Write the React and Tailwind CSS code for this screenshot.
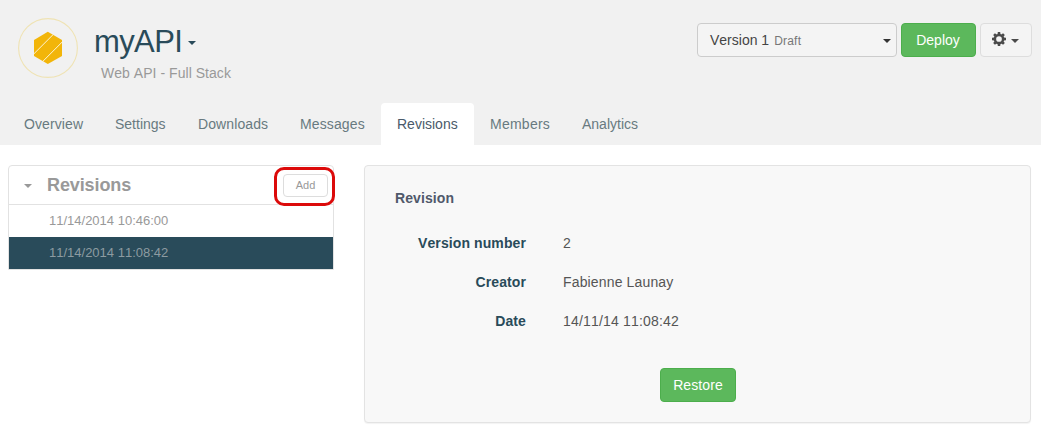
const tabs = [
  { label: "Overview", cls: "w-[91px] tracking-[0.1px]" },
  { label: "Settings", cls: "w-[83px]" },
  { label: "Downloads", cls: "w-[102px] tracking-[0.1px]" },
  { label: "Messages", cls: "w-[97px] tracking-[0.12px]" },
  { label: "Revisions", cls: "w-[93px]", active: true },
  { label: "Members", cls: "w-[92px] tracking-[0.25px]" },
  { label: "Analytics", cls: "w-[90px]" },
];

const details = [
  { label: "Version number", value: "2", cls: "" },
  { label: "Creator", value: "Fabienne Launay", cls: "tracking-[0.15px]" },
  { label: "Date", value: "14/11/14 11:08:42", cls: "tracking-[0.18px]" },
];

function Caret({ className = "" }) {
  return (
    <svg className={`h-1 w-2 shrink-0 ${className}`} viewBox="0 0 8 4" fill="currentColor">
      <path d="M0 0h8L4 4z" />
    </svg>
  );
}

function Logo() {
  return (
    <svg className="size-[60px] shrink-0" viewBox="0 0 60 60">
      <circle cx="30" cy="30" r="29.4" fill="none" stroke="#efe3b4" strokeWidth="1.1" />
      <path d="M29.8 13.8 44 22v16l-14.2 8L16 38V22z" fill="#f2b509" />
      <path d="M15.5 36.2 35.5 16.2M24 44.2 44.5 23.7" stroke="#fdf5d8" strokeWidth="1" />
    </svg>
  );
}

function Gear() {
  return (
    <svg className="-mt-[2px] size-[14px] shrink-0" viewBox="-7 -7 14 14">
      <circle r="4.1" fill="none" stroke="currentColor" strokeWidth="2.5" />
      {[0, 45, 90, 135, 180, 225, 270, 315].map((a) => (
        <path key={a} d="M-1.5-4.7-1.2-7H1.2l.3 2.3z" fill="currentColor" transform={`rotate(${a})`} />
      ))}
    </svg>
  );
}

function Header() {
  return (
    <header className="flex h-[145px] flex-col justify-between bg-[#f1f1f1]">
      <div className="flex items-start pl-[18px] pr-[9px] pt-[18px]">
        <Logo />
        <div className="ml-[16px] flex-1">
          <h1 className="flex h-[46px] items-center pt-px text-[31px] leading-[46px] tracking-[-0.6px] text-[#294b5a]">
            myAPI
            <Caret className="ml-[6px] mt-[3px]" />
          </h1>
          <p className="pl-[7px] text-[14px] leading-[18px] tracking-[0.04px] text-[#999]">Web API - Full Stack</p>
        </div>
        <div className="mt-[5px] flex h-[34px] gap-1">
          <button className="flex h-[34px] w-[200px] items-center rounded border border-[#ccc] bg-[#f4f4f4] pl-3 pr-[5px] text-[14px] text-[#444]">
            Version 1
            <span className="ml-[5px] mt-px flex-1 text-left text-[12px] tracking-[0.2px] text-[#777]">Draft</span>
            <Caret className="mt-[2px] text-[#333]" />
          </button>
          <button className="h-[34px] w-[75px] rounded border border-[#4cae4c] bg-[#5cb85c] pr-px text-[14px] text-white">Deploy</button>
          <button className="flex h-[34px] w-[52px] items-center rounded border border-[#ddd] bg-[#f4f4f4] pl-[11px] text-[#4a4a4a]">
            <Gear />
            <Caret className="ml-[5px] mt-[2px]" />
          </button>
        </div>
      </div>
      <nav className="flex h-[42px] pl-2">
        {tabs.map((t) => (
          <a
            key={t.label}
            className={`h-[42px] rounded-t pl-4 text-[14px] leading-[42px] ${t.cls} ${t.active ? "bg-white text-[#4a5a6a]" : "text-[#687a80]"}`}
          >
            {t.label}
          </a>
        ))}
      </nav>
    </header>
  );
}

export default function App() {
  return (
    <div className="h-[432px] w-[1041px] overflow-hidden bg-white font-['Liberation_Sans',Arial,sans-serif] [font-kerning:none]">
      <Header />
      <main className="flex items-start gap-[30px] pl-2 pt-5">
        <section className="w-[326px] rounded-t border border-[#e2e2e2] text-[#999]">
          <div className="relative flex h-[39px] items-center border-b border-[#e2e2e2] pl-[15px] pr-[5px]">
            <Caret className="mt-[2px]" />
            <h2 className="ml-[15px] flex-1 text-[18px] font-bold leading-[20px] tracking-[-0.1px]">Revisions</h2>
            <button className="h-[23px] w-[45px] rounded border border-[#ddd] bg-white text-[11px]">Add</button>
            <div className="absolute -right-[2px] top-px h-[39px] w-[61px] rounded-[10px] border-[3px] border-[#dc0a0a]" />
          </div>
          <div className="h-8 pl-10 text-[13px] leading-[31px]">11/14/2014 10:46:00</div>
          <div className="h-8 bg-[#294b5a] pl-10 text-[13px] leading-[31px] text-[#8d9ba1]">11/14/2014 11:08:42</div>
        </section>
        <section className="h-[258px] w-[667px] rounded border border-[#e3e3e3] bg-[#f8f8f8] pl-[30px] pt-[22px] shadow-[0_1px_1px_rgba(0,0,0,0.05)]">
          <h3 className="text-[14px] font-bold leading-5 tracking-[0.1px] text-[#50596b]">Revision</h3>
          <dl className="mt-[25px] flex flex-col gap-[19px] text-[14px] leading-5">
            {details.map((d) => (
              <div key={d.label} className="flex gap-[37px]">
                <dt className="w-[131px] text-right font-bold tracking-[0.1px] text-[#294b5a]">{d.label}</dt>
                <dd className={`text-[#555] ${d.cls}`}>{d.value}</dd>
              </div>
            ))}
          </dl>
          <button className="ml-[265px] mt-[37px] h-[34px] w-[76px] rounded border border-[#4cae4c] bg-[#5cb85c] text-[14px] tracking-[0.1px] text-white">Restore</button>
        </section>
      </main>
    </div>
  );
}
